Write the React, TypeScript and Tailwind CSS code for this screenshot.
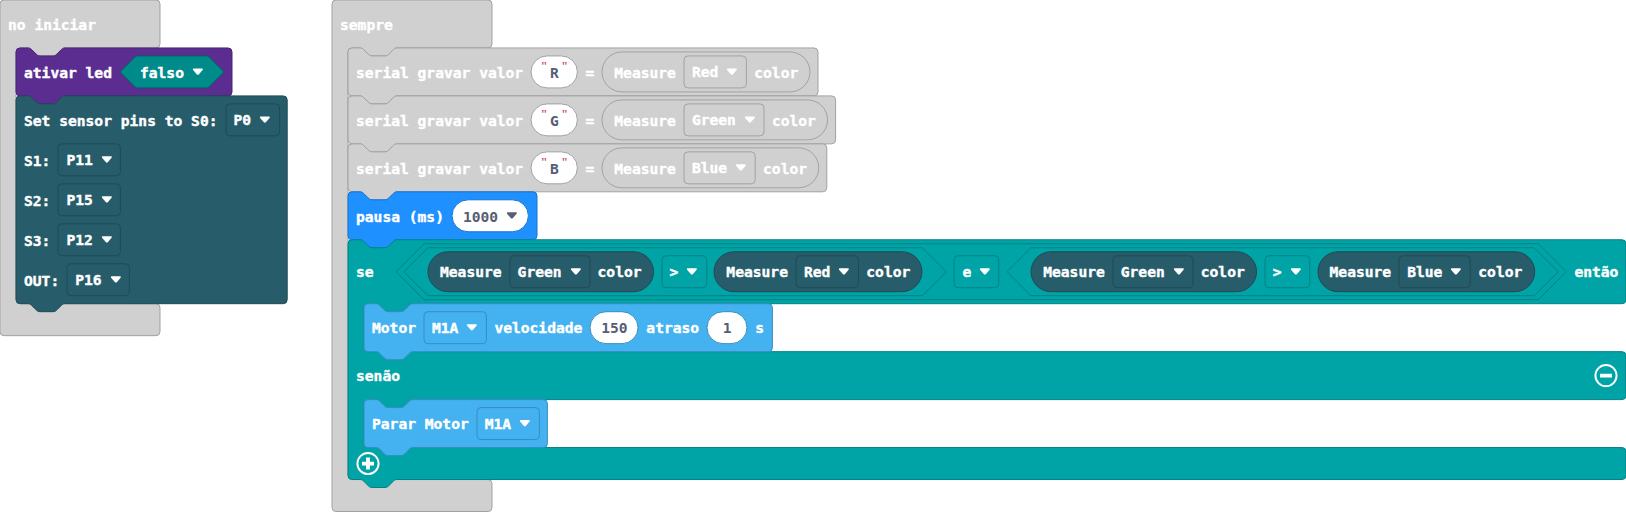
import React from "react";

const NOTCH_RIGHT = "c2,0 3,1 4,2 l4,4 c1,1 2,2 4,2 h13 c2,0 3,-1 4,-2 l4,-4 c1,-1 2,-2 4,-2";
const NOTCH_LEFT = "c-2,0 -3,1 -4,2 l-4,4 c-1,1 -2,2 -4,2 h-13 c-2,0 -3,-1 -4,-2 l-4,-4 c-1,-1 -2,-2 -4,-2";

type Mouth = { header: number; height: number };
type Tone = { fill: string; stroke: string };

/** Outline of a statement block, with optional mouths for nested statements. */
function blockPath(w: number, h: number, hat: boolean, mouths: Mouth[]) {
  let d = hat ? "M0,4 a4,4 0 0 1 4,-4" : `M0,4 a4,4 0 0 1 4,-4 H12 ${NOTCH_RIGHT}`;
  d += ` H${w - 4} a4,4 0 0 1 4,4`;
  let y = 0;
  for (const m of mouths) {
    y += m.header;
    d += ` V${y - 4} a4,4 0 0 1 -4,4 H65 ${NOTCH_LEFT} H20 a4,4 0 0 0 -4,4`;
    y += m.height;
    d += ` V${y - 4} a4,4 0 0 0 4,4 H${w - 4} a4,4 0 0 1 4,4`;
  }
  d += ` V${h - 4} a4,4 0 0 1 -4,4`;
  d += hat ? " H4" : ` H49 ${NOTCH_LEFT} H4`;
  d += " a4,4 0 0 1 -4,-4 z";
  return d;
}

function Shape({ d, fill, stroke }: { d: string } & Tone) {
  return (
    <svg className="pointer-events-none absolute inset-0 h-full w-full overflow-visible" aria-hidden="true">
      <path d={d} fill={fill} stroke={stroke} strokeWidth="1" />
    </svg>
  );
}

/** Rounded outline whose stroke is centred on the edge of its container. */
function Outline({ r, fill, stroke }: { r: number } & Tone) {
  return (
    <svg className="pointer-events-none absolute inset-0 h-full w-full overflow-visible" aria-hidden="true">
      <rect width="100%" height="100%" rx={r} fill={fill} stroke={stroke} strokeWidth="1" />
    </svg>
  );
}

const GREY: Tone = { fill: "#d0d0d0", stroke: "#a2a2a2" };
const PURPLE: Tone = { fill: "#5c2d91", stroke: "#4a2474" };
const SENSOR: Tone = { fill: "#275c6b", stroke: "#1f4a56" };
const BLUE: Tone = { fill: "#1e90ff", stroke: "#1873cc" };
const TEAL: Tone = { fill: "#00a4a6", stroke: "#008385" };
const SKY: Tone = { fill: "#44b1f0", stroke: "#368ec0" };

function Block({ className, w, tone, children }: { className: string; w: number; tone: Tone; children: React.ReactNode }) {
  return (
    <div className={`relative flex h-12 items-center gap-2 px-2 ${className}`}>
      <Shape d={blockPath(w, 48, false, [])} {...tone} />
      {children}
    </div>
  );
}

function Label({ children }: { children: string }) {
  return <span className="relative pt-[var(--label-pad)] whitespace-pre">{children}</span>;
}

function Caret({ className = "fill-white" }: { className?: string }) {
  return (
    <svg className={`relative ml-2 h-2 w-3 shrink-0 ${className}`} viewBox="0 0 12 8" aria-hidden="true">
      <path d="M1.6 0.5 H10.1 Q11.4 0.8 10.6 2 L7 6.2 Q5.85 7.4 4.7 6.2 L1.1 2 Q0.3 0.8 1.6 0.5 Z" />
    </svg>
  );
}

function Dropdown({ value, tone }: { value: string; tone: Tone }) {
  return (
    <span className="relative flex h-8 items-center px-2">
      <Outline r={4} {...tone} />
      <span className="relative pt-[var(--field-pad)]">{value}</span>
      <Caret />
    </span>
  );
}

function Measure({ value, off = false }: { value: string; off?: boolean }) {
  const tone = off ? GREY : SENSOR;
  return (
    <span className="relative flex h-10 items-center gap-2 px-3">
      <Outline r={20} {...tone} />
      <Label>Measure</Label>
      <Dropdown value={value} tone={tone} />
      <Label>color</Label>
    </span>
  );
}

type HexagonProps = { w: number; h: number; tone: Tone; className: string; children: React.ReactNode };

function Hexagon({ w, h, tone, className, children }: HexagonProps) {
  const s = h / 2;
  return (
    <span className={`relative flex shrink-0 items-center ${className}`}>
      <Shape d={`M${s},0 H${w - s} L${w},${s} L${w - s},${h} H${s} L0,${s} Z`} {...tone} />
      {children}
    </span>
  );
}

function Field({ className, stroke, children }: { className: string; stroke: string; children: React.ReactNode }) {
  return (
    <span className={`relative flex h-8 shrink-0 items-center text-[#575e75] [-webkit-text-stroke:0] ${className}`}>
      <Outline r={16} fill="#fff" stroke={stroke} />
      {children}
    </span>
  );
}

function Quote() {
  return (
    <span className="relative w-[9.3px] pb-[12px] text-center font-['Liberation_Serif',serif] text-[12px] font-bold text-[#cc4a50]">
      "
    </span>
  );
}

function SerialBlock({ letter, color, w, className }: { letter: string; color: string; w: number; className: string }) {
  return (
    <Block className={className} w={w} tone={GREY}>
      <Label>serial gravar valor</Label>
      <Field className="w-[46.4px] justify-center" stroke="#a2a2a2">
        <Quote />
        <span className="relative w-[11px] pt-[2.6px] text-center">{letter}</span>
        <Quote />
      </Field>
      <Label>=</Label>
      <Measure value={color} off />
    </Block>
  );
}

function Compare({ w, className, left, right }: { w: number; className: string; left: string; right: string }) {
  return (
    <Hexagon w={w} h={48} tone={TEAL} className={`h-12 gap-2 px-6 ${className}`}>
      <Measure value={left} />
      <Dropdown value=">" tone={TEAL} />
      <Measure value={right} />
    </Hexagon>
  );
}

function RoundButton({ plus = false }: { plus?: boolean }) {
  return (
    <svg className="relative h-6 w-6" viewBox="0 0 24 24" fill="none" stroke="#fff" aria-hidden="true">
      <circle cx="12" cy="12" r="10.6" strokeWidth="1.9" />
      <path d={plus ? "M6 12h12M12 6v12" : "M6 12h12"} strokeWidth="3.8" />
    </svg>
  );
}

function Hat({ title, h, mouth, children }: { title: string; h: number; mouth: number; children: React.ReactNode }) {
  return (
    <section className="relative flex w-40 flex-col pb-8">
      <Shape d={blockPath(160, h, true, [{ header: 48, height: mouth }])} {...GREY} />
      <header className="flex h-12 items-center px-2">
        <Label>{title}</Label>
      </header>
      <div className="flex flex-col items-start pl-4">{children}</div>
    </section>
  );
}

function IfBlock() {
  const d = blockPath(1278, 240, false, [
    { header: 64, height: 48 },
    { header: 48, height: 48 },
  ]);
  return (
    <div className="relative flex w-[1278.4px] flex-col [--field-pad:0px] [--label-pad:0px]">
      <Shape d={d} {...TEAL} />
      <div className="flex h-16 items-center justify-between px-2">
        <Label>se</Label>
        <div className="flex items-center gap-2">
          <Hexagon w={1170.4} h={56} tone={TEAL} className="h-14 w-[1170.4px] gap-2 px-2">
            <Compare className="w-[542.4px]" w={542.4} left="Green" right="Red" />
            <Dropdown value="e" tone={TEAL} />
            <Compare className="w-[551.2px]" w={551.2} left="Green" right="Blue" />
          </Hexagon>
          <Label>então</Label>
        </div>
      </div>
      <div className="relative z-10 flex pl-4">
        <Block className="w-[408.4px]" w={408.4} tone={SKY}>
          <Label>Motor</Label>
          <Dropdown value="M1A" tone={SKY} />
          <Label>velocidade</Label>
          <Field className="w-12 justify-center" stroke={SKY.stroke}>
            <span className="relative">150</span>
          </Field>
          <Label>atraso</Label>
          <Field className="w-10 justify-center" stroke={SKY.stroke}>
            <span className="relative">1</span>
          </Field>
          <Label>s</Label>
        </Block>
      </div>
      <div className="flex h-12 items-center justify-between px-2">
        <Label>senão</Label>
        <RoundButton />
      </div>
      <div className="relative z-10 flex pl-4">
        <Block className="w-[183.4px]" w={183.4} tone={SKY}>
          <Label>Parar Motor</Label>
          <Dropdown value="M1A" tone={SKY} />
        </Block>
      </div>
      <div className="flex h-8 items-center px-2">
        <RoundButton plus />
      </div>
    </div>
  );
}

const pins = [
  ["Set sensor pins to S0:", "P0"],
  ["S1:", "P11"],
  ["S2:", "P15"],
  ["S3:", "P12"],
  ["OUT:", "P16"],
];

export default function App() {
  return (
    <div className="h-[512px] w-[1626px] overflow-hidden bg-white">
      <main className="flex origin-top-left scale-y-[0.999] items-start gap-[172px] pt-[0.4px] font-['DejaVu_Sans_Mono','Liberation_Mono',monospace] text-[14.61px] leading-none font-bold text-white [--field-pad:0.8px] [--label-pad:2.4px] [-webkit-text-stroke:0.4px]">
        <Hat title="no iniciar" h={336} mouth={256}>
          <Block className="w-[216px]" w={216} tone={PURPLE}>
            <Label>ativar led</Label>
            <Hexagon w={104} h={32} tone={{ fill: "#008b8b", stroke: "#00605f" }} className="h-8 w-[104px] pl-5">
              <Label>falso</Label>
              <Caret />
            </Hexagon>
          </Block>
          <div className="relative flex h-[208px] w-[271.2px] flex-col gap-2 p-2">
            <Shape d={blockPath(271.2, 208, false, [])} {...SENSOR} />
            {pins.map(([pin, value]) => (
              <div key={pin} className="flex items-center gap-2">
                <Label>{pin}</Label>
                <Dropdown value={value} tone={SENSOR} />
              </div>
            ))}
          </div>
        </Hat>
        <Hat title="sempre" h={512} mouth={432}>
          <SerialBlock className="w-[470px]" letter="R" color="Red" w={470} />
          <SerialBlock className="w-[487.6px]" letter="G" color="Green" w={487.6} />
          <SerialBlock className="w-[478.8px]" letter="B" color="Blue" w={478.8} />
          <Block className="w-[189px]" w={189} tone={BLUE}>
            <Label>pausa (ms)</Label>
            <Field className="w-[76.4px] pl-[11px]" stroke={BLUE.stroke}>
              <span className="relative pt-[1.2px]">1000</span>
              <Caret className="fill-[#575e75]" />
            </Field>
          </Block>
          <IfBlock />
        </Hat>
      </main>
    </div>
  );
}
